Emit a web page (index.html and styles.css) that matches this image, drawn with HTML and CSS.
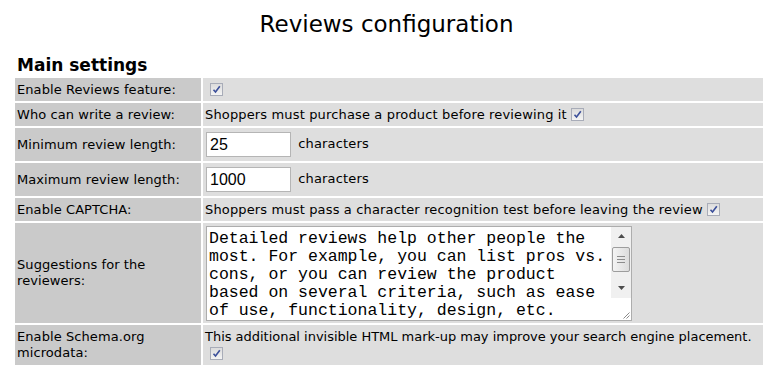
FILE: index.html
```html
<!DOCTYPE html>
<html>
<head>
<meta charset="utf-8">
<title>Reviews configuration</title>
<link rel="stylesheet" href="styles.css">
</head>
<body>
<h1 class="title">Reviews configuration</h1>
<div class="section">
  <h2 class="section-title">Main settings</h2>
  <table class="settings">
    <tr class="row-1">
      <td class="label">Enable Reviews feature:</td>
      <td class="value"><span class="cb cb-first"><svg width="9" height="9" viewBox="0 0 9 9"><path d="M1.5 4.8 L3.5 7 L7.8 1.2" fill="none" stroke="#3b4f9a" stroke-width="1.6"/></svg></span></td>
    </tr>
    <tr class="row-1">
      <td class="label">Who can write a review:</td>
      <td class="value">Shoppers must purchase a product before reviewing it <span class="cb"><svg width="9" height="9" viewBox="0 0 9 9"><path d="M1.5 4.8 L3.5 7 L7.8 1.2" fill="none" stroke="#3b4f9a" stroke-width="1.6"/></svg></span></td>
    </tr>
    <tr class="row-input">
      <td class="label">Minimum review length:</td>
      <td class="value"><input class="num" type="text" value="25"> characters</td>
    </tr>
    <tr class="row-input">
      <td class="label">Maximum review length:</td>
      <td class="value"><input class="num" type="text" value="1000"> characters</td>
    </tr>
    <tr class="row-1">
      <td class="label">Enable CAPTCHA:</td>
      <td class="value">Shoppers must pass a character recognition test before leaving the review <span class="cb"><svg width="9" height="9" viewBox="0 0 9 9"><path d="M1.5 4.8 L3.5 7 L7.8 1.2" fill="none" stroke="#3b4f9a" stroke-width="1.6"/></svg></span></td>
    </tr>
    <tr class="row-area">
      <td class="label">Suggestions for the reviewers:</td>
      <td class="value area-cell">
        <div class="area-wrap">
          <textarea class="area">Detailed reviews help other people the most. For example, you can list pros vs. cons, or you can review the product based on several criteria, such as ease of use, functionality, design, etc.</textarea>
          <div class="scrollbar">
            <div class="sb-btn"><svg width="7" height="4" viewBox="0 0 7 4"><path d="M0 4 L3.5 0 L7 4 Z" fill="#4d4d4d"/></svg></div>
            <div class="sb-thumb"><span></span><span></span><span></span></div>
            <div class="sb-track"></div>
            <div class="sb-btn"><svg width="7" height="4" viewBox="0 0 7 4"><path d="M0 0 L7 0 L3.5 4 Z" fill="#4d4d4d"/></svg></div>
            <div class="sb-corner"><svg width="8" height="8" viewBox="0 0 8 8"><path d="M7.5 1.5 L1.5 7.5 M7.5 4.5 L4.5 7.5" stroke="#8a8a8a" stroke-width="1"/></svg></div>
          </div>
        </div>
      </td>
    </tr>
    <tr class="row-2">
      <td class="label">Enable Schema.org microdata:</td>
      <td class="value"><span class="nowrap">This additional invisible HTML mark-up may improve your search engine placement.</span><br><span class="cb cb-block"><svg width="9" height="9" viewBox="0 0 9 9"><path d="M1.5 4.8 L3.5 7 L7.8 1.2" fill="none" stroke="#3b4f9a" stroke-width="1.6"/></svg></span></td>
    </tr>
  </table>
</div>
</body>
</html>
```
FILE: styles.css
```css
html, body {
  background: #ffffff;
}
body {
  margin: 8px;
  font-family: "DejaVu Sans", Verdana, sans-serif;
  font-size: 13px;
  color: #000;
}
.title {
  margin: 0;
  padding-top: 1px;
  font-size: 23px;
  font-weight: normal;
  line-height: 30px;
  text-align: center;
}
.section {
  padding: 0 5px;
}
.section-title {
  margin: 16px 0 0 4px;
  font-size: 17px;
  font-weight: bold;
  line-height: 21px;
}
.settings {
  width: 752px;
  border-spacing: 2px;
  margin-top: 0;
}
.row-1 { height: 23px; }
.row-input { height: 33px; }
.row-area { height: 100px; }
.row-2 { height: 40px; }
.label {
  width: 182px;
  background: #cacaca;
  padding: 0 2px;
  line-height: 16px;
  letter-spacing: 0.08px;
  vertical-align: middle;
}
.value {
  background: #dedede;
  padding: 0 2px;
  line-height: 16px;
  letter-spacing: 0.15px;
  vertical-align: middle;
}
.nowrap {
  white-space: nowrap;
  letter-spacing: -0.02px;
}
.row-input .value {
  padding-left: 3px;
}
.num {
  box-sizing: border-box;
  width: 85px;
  height: 25px;
  margin: 0 3px 0 0;
  padding: 1px 3px 0;
  border: 1px solid #b5b5b5;
  background: #fff;
  font-family: "Liberation Sans", Arial, sans-serif;
  font-size: 16px;
  letter-spacing: 0;
  color: #000;
  vertical-align: middle;
}
.cb {
  display: inline-block;
  box-sizing: border-box;
  width: 13px;
  height: 13px;
  border: 1px solid #a8acb8;
  background: linear-gradient(#dcdcdc, #f4f4f4);
  vertical-align: -2px;
  position: relative;
}
.cb svg {
  position: absolute;
  left: 1px;
  top: 1px;
}
.cb-first {
  margin-left: 5px;
}
.cb-block {
  margin: 2px 0 0 5px;
}
.area-cell {
  padding: 0 2px 0 3px;
}
.area-wrap {
  position: relative;
  width: 426px;
  height: 95px;
}
.area {
  display: block;
  box-sizing: border-box;
  width: 426px;
  height: 95px;
  margin: 0;
  padding: 3px 22px 0 2px;
  border: 1px solid #adadad;
  background: #fff;
  font-family: "Courier New", "Nimbus Mono PS", "FreeMono", "Liberation Mono", monospace;
  font-size: 16.5px;
  line-height: 18px;
  letter-spacing: 0;
  color: #000;
  resize: none;
  overflow: hidden;
}
.scrollbar {
  position: absolute;
  top: 1px;
  right: 1px;
  bottom: 1px;
  width: 20px;
  background: #f0f0f0;
  display: flex;
  flex-direction: column;
}
.sb-btn {
  height: 19px;
  display: flex;
  align-items: center;
  justify-content: center;
}
.sb-thumb {
  box-sizing: border-box;
  height: 25px;
  margin: 1px 1px 0;
  border: 1px solid #9d9d9d;
  border-radius: 2px;
  background: linear-gradient(90deg, #f4f4f4, #dcdcdc);
  display: flex;
  flex-direction: column;
  justify-content: center;
  align-items: center;
  gap: 2px;
}
.sb-thumb span {
  display: block;
  width: 8px;
  height: 1px;
  background: #8c8c8c;
}
.sb-track {
  flex: 1;
}
.sb-corner {
  height: 21px;
  background: #fff;
  display: flex;
  align-items: flex-end;
  justify-content: flex-end;
  padding: 0 1px 1px 0;
}
```
